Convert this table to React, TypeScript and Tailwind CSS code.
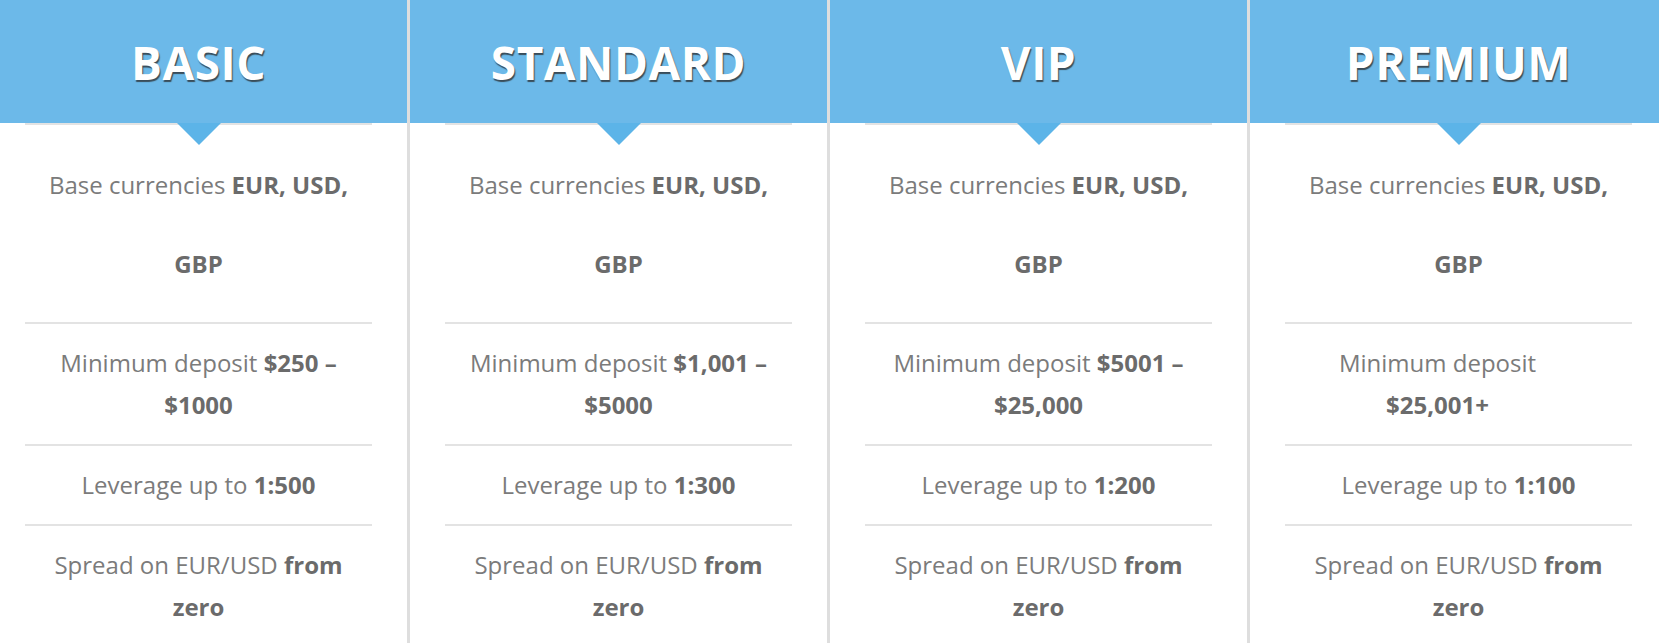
import clsx from "clsx";

type Plan = {
  name: string;
  amount: string;
  breakDeposit?: boolean;
  leverage: string;
};

const plans: Plan[] = [
  { name: "BASIC", amount: "$250 – $1000", leverage: "1:500" },
  { name: "STANDARD", amount: "$1,001 – $5000", leverage: "1:300" },
  { name: "VIP", amount: "$5001 – $25,000", leverage: "1:200" },
  { name: "PREMIUM", amount: "$25,001+", breakDeposit: true, leverage: "1:100" },
];

function Row({ children, className }: { children: React.ReactNode; className?: string }) {
  return (
    <div className={clsx("border-t-2 border-[#e3e3e3] text-center", className)}>
      {children}
    </div>
  );
}

function PlanColumn({ plan, last }: { plan: Plan; last: boolean }) {
  return (
    <div className={clsx("shrink-0", last ? "w-[417px]" : "w-[420px] border-r-[3px] border-[#dedede]")}>
      <header className="flex h-[123px] items-center justify-center bg-[#6cb9e9] pt-[2px]">
        <h2 className="text-[46px] font-bold tracking-[0.5px] text-white [text-shadow:1px_2px_1px_rgba(40,40,40,0.75)]">
          {plan.name}
        </h2>
      </header>

      <div className="relative mx-[35px] text-[24px] text-[#7b7b7b]">
        <span className="absolute left-1/2 top-0 h-0 w-0 -translate-x-1/2 border-x-[22px] border-t-[22px] border-x-transparent border-t-[#5cb4e8]" />

        <Row className="px-2 pt-[20px] pb-[19px] leading-[79px]">
          Base currencies <b className="text-[#6b6b6b]">EUR, USD, GBP</b>
        </Row>
        {plan.breakDeposit ? (
          <Row className="pl-2 pr-[50px] py-[18px] leading-[42px]">
            Minimum deposit
            <br />
            <b className="text-[#6b6b6b]">{plan.amount}</b>
          </Row>
        ) : (
          <Row className="px-2 py-[18px] leading-[42px]">
            Minimum deposit <b className="text-[#6b6b6b]">{plan.amount}</b>
          </Row>
        )}
        <Row className="px-2 py-[18px] leading-[42px]">
          Leverage up to <b className="text-[#6b6b6b]">{plan.leverage}</b>
        </Row>
        <Row className="px-2 py-[18px] leading-[42px]">
          Spread on EUR/USD <b className="text-[#6b6b6b]">from zero</b>
        </Row>
      </div>
    </div>
  );
}

export default function App() {
  return (
    <div className="h-[643px] w-[1659px] overflow-hidden bg-white font-['Open_Sans',sans-serif]">
      <div className="ml-[-10px] flex">
        {plans.map((plan, i) => (
          <PlanColumn key={plan.name} plan={plan} last={i === plans.length - 1} />
        ))}
      </div>
    </div>
  );
}
